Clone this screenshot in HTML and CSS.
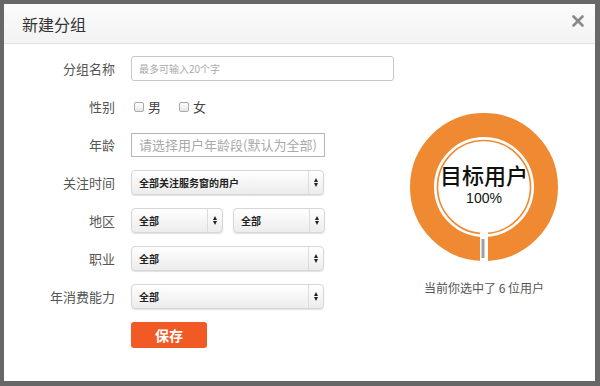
FILE: index.html
```html
<!DOCTYPE html>
<html lang="zh-CN">
<head>
    <meta charset="UTF-8">
    <title>新建分组</title>
    <link rel="stylesheet" href="styles.css">
</head>
<body>
    <div class="dialog">
        <header class="dialog-head">
            <h1>新建分组</h1>
            <svg class="close" width="12" height="12" viewBox="0 0 12 12">
                <path d="M1.5 1.5 L10.5 10.5 M10.5 1.5 L1.5 10.5" stroke="#8a8a8a" stroke-width="2.6" stroke-linecap="round"/>
            </svg>
        </header>
        <main class="dialog-body">
            <section class="form">
                <div class="row">
                    <label>分组名称</label>
                    <div class="input name">最多可输入20个字</div>
                </div>
                <div class="row">
                    <label>性别</label>
                    <div class="checks">
                        <span class="check"><i></i>男</span>
                        <span class="check"><i></i>女</span>
                    </div>
                </div>
                <div class="row">
                    <label>年龄</label>
                    <div class="input age">请选择用户年龄段(默认为全部)</div>
                </div>
                <div class="row">
                    <label>关注时间</label>
                    <div class="select wide"><span>全部关注服务窗的用户</span><b class="arrow"></b></div>
                </div>
                <div class="row">
                    <label>地区</label>
                    <div class="pair">
                        <div class="select"><span>全部</span><b class="arrow"></b></div>
                        <div class="select"><span>全部</span><b class="arrow"></b></div>
                    </div>
                </div>
                <div class="row">
                    <label>职业</label>
                    <div class="select wide"><span>全部</span><b class="arrow"></b></div>
                </div>
                <div class="row">
                    <label>年消费能力</label>
                    <div class="select wide"><span>全部</span><b class="arrow"></b></div>
                </div>
                <div class="row">
                    <label></label>
                    <button class="save">保存</button>
                </div>
            </section>
            <section class="chart">
                <div class="donut">
                    <svg width="150" height="150" viewBox="0 0 150 150">
                        <circle cx="75" cy="75" r="62" fill="none" stroke="#ef8a33" stroke-width="24"/>
                        <circle cx="75" cy="75" r="46.5" fill="none" stroke="#ef8a33" stroke-width="1.6"/>
                        <rect x="71" y="118" width="8" height="32" fill="#fff"/>
                        <rect x="72.5" y="127" width="3" height="19" fill="#a0a0a0"/>
                    </svg>
                    <div class="donut-text">
                        <strong>目标用户</strong>
                        <span>100%</span>
                    </div>
                </div>
                <p class="count">当前你选中了 6 位用户</p>
            </section>
        </main>
    </div>
</body>
</html>
```
FILE: styles.css
```css
* {
    box-sizing: border-box;
    margin: 0;
    padding: 0;
}
body {
    width: 600px;
    height: 386px;
    background-color: #676767;
    font-family: "Noto Sans CJK SC", "Noto Sans", sans-serif;
    color: #555;
    padding: 4px 5px 5px 4px;
}
.dialog {
    height: 100%;
    background-color: #fff;
    display: flex;
    flex-direction: column;
}
.dialog-head {
    height: 40px;
    display: flex;
    align-items: center;
    justify-content: space-between;
    padding: 0 11px 0 18px;
    background: linear-gradient(#fbfbfb, #f3f3f3);
    border-bottom: 1px solid #e2e2e2;
}
.dialog-head h1 {
    font-size: 16px;
    font-weight: 400;
    color: #333;
}
.close {
    margin-top: -6px;
}
.dialog-body {
    flex: 1;
    display: flex;
}
.form {
    width: 396px;
    padding-top: 12px;
    display: flex;
    flex-direction: column;
    gap: 13px;
}
.row {
    display: flex;
    align-items: center;
    height: 25px;
}
.row label {
    width: 111px;
    margin-right: 16px;
    text-align: right;
    font-size: 13px;
    color: #555;
}
.input {
    height: 25px;
    border: 1px solid #c8c8c8;
    color: #aaa;
    display: flex;
    align-items: center;
}
.name {
    width: 263px;
    border-radius: 3px;
    font-size: 10px;
    padding-left: 7px;
}
.age {
    width: 194px;
    height: 24px;
    border-color: #b4b4b4;
    font-size: 13px;
    padding-left: 7px;
}
.checks {
    display: flex;
    gap: 18px;
    font-size: 13px;
    color: #444;
    padding-left: 3px;
}
.check {
    display: flex;
    align-items: center;
}
.check i {
    width: 10px;
    height: 10px;
    border: 1px solid #aaa;
    border-radius: 2px;
    background: linear-gradient(#fff, #e6e6e6);
    margin-right: 4px;
}
.select {
    width: 92px;
    height: 25px;
    display: flex;
    align-items: center;
    justify-content: space-between;
    border: 1px solid #d6d6d6;
    border-radius: 4px;
    background: linear-gradient(#ffffff, #ececec);
    box-shadow: 0 1px 1px rgba(0, 0, 0, 0.12);
    font-size: 10px;
    font-weight: 700;
    color: #222;
    padding-left: 7px;
}
.select.wide {
    width: 193px;
}
.pair {
    display: flex;
    gap: 10px;
}
.arrow {
    width: 15px;
    height: 100%;
    border-left: 1px solid #dcdcdc;
    position: relative;
}
.arrow::before,
.arrow::after {
    content: "";
    position: absolute;
    left: 5px;
    border-left: 2.5px solid transparent;
    border-right: 2.5px solid transparent;
}
.arrow::before {
    top: 7px;
    border-bottom: 4px solid #222;
}
.arrow::after {
    top: 12px;
    border-top: 4px solid #222;
}
.save {
    width: 76px;
    height: 26px;
    border: none;
    border-radius: 3px;
    background-color: #f15a24;
    color: #fff;
    font-family: inherit;
    font-size: 14px;
    font-weight: 700;
}
.chart {
    width: 168px;
    padding-top: 68px;
    display: flex;
    flex-direction: column;
    align-items: center;
}
.donut {
    position: relative;
    width: 150px;
    height: 150px;
}
.donut-text {
    position: absolute;
    inset: 0;
    display: flex;
    flex-direction: column;
    align-items: center;
    justify-content: center;
    color: #111;
    padding-bottom: 8px;
}
.donut-text strong {
    font-size: 22px;
    font-weight: 500;
    line-height: 30px;
}
.donut-text span {
    font-family: "Liberation Sans", sans-serif;
    font-size: 14px;
    line-height: 18px;
}
.count {
    margin-top: 17px;
    font-size: 12px;
    color: #555;
}
```
